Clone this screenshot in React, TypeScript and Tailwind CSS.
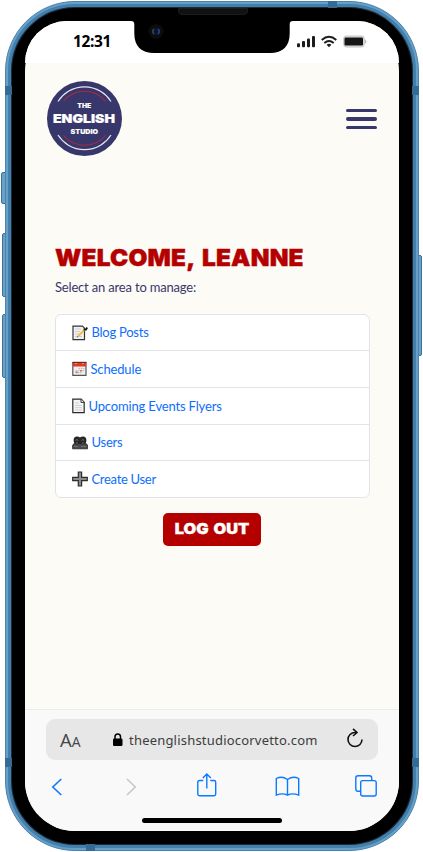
import React from "react";

const links = [
  { label: "Blog Posts", icon: "memo", row: "h-[35px]", text: "ml-[4px] tracking-[-0.25px]" },
  { label: "Schedule", icon: "calendar", row: "h-[37px]", text: "ml-[3px] tracking-[-0.15px]" },
  { label: "Upcoming Events Flyers", icon: "page", row: "h-[37px]", text: "ml-[4px] tracking-[-0.16px]" },
  { label: "Users", icon: "users", row: "h-[36px]", text: "ml-[4px] tracking-[-0.25px]" },
  { label: "Create User", icon: "plus", row: "h-[37px]", text: "ml-[4px] tracking-[-0.3px]" },
];

function Logo() {
  return (
    <svg width="76" height="76" viewBox="-0.5 0.5 76 76" className="block">
      <circle cx="38" cy="38" r="37.5" fill="#38376b" />
      <g fill="none" strokeLinecap="butt">
        <path d="M11.5 21A31.3 31.3 0 0 1 64.5 21M11.5 54.5A31.3 31.3 0 0 0 64.5 54.5" stroke="#e6e6ef" strokeWidth="1.2" />
        <path d="M17 20.5A27.5 27.5 0 0 1 59 20.5M17 55A27.5 27.5 0 0 0 59 55" stroke="#b0283f" strokeWidth="1.1" />
      </g>
      <g fill="#fff" stroke="#fff" textAnchor="middle" fontFamily="Inter, sans-serif" fontWeight="900">
        <text x="37.800" y="27.200" fontSize="6.600" strokeWidth=".1" textLength="14" lengthAdjust="spacingAndGlyphs">THE</text>
        <text x="37.500" y="42.300" fontSize="12.200" strokeWidth=".2" textLength="62" lengthAdjust="spacingAndGlyphs">ENGLISH</text>
        <text x="37.800" y="53" fontSize="6.600" strokeWidth=".1" textLength="27.500" lengthAdjust="spacingAndGlyphs">STUDIO</text>
      </g>
    </svg>
  );
}

function RowIcon({ name }: { name: string }) {
  if (name === "memo")
    return (
      <svg width="16" height="16" viewBox="0 0 16 16" className="shrink-0">
        <path d="M1 1.200h9.500l2 2v11.500H1z" fill="#f1f1f1" stroke="#333" strokeWidth="1.200" />
        <path d="M3 4h6M3 6.500h5M3 9h4M3 11.500h7" stroke="#cfcfcf" />
        <path d="M6 11.300L12.600 4.600" stroke="#f0bd4c" strokeWidth="2" />
        <path d="M11.600 4.500h2.400l1.200-2" fill="none" stroke="#1a1a1a" strokeWidth="1.900" />
        <path d="M4.800 12.600l1.600-.5-1-1z" fill="#444" />
      </svg>
    );
  if (name === "calendar")
    return (
      <svg width="16" height="16" viewBox="0 0 16 16" className="shrink-0">
        <path d="M.8 1.600h13.200v12.800H.8z" fill="#efefef" stroke="#555" strokeWidth="1.200" />
        <path d="M1 1.500h13v4H1z" fill="#e2391f" />
        <path d="M.5 1.300h14" stroke="#4a2a2a" />
        <path d="M3 2.600h2M10 2.600h2" stroke="#f88" />
        <path d="M6.500 7.700h6M3.500 9.700h9M3.500 11.700h6" stroke="#b5b5b5" strokeDasharray="1.500 .8" />
        <path d="M3.500 11.200h2.400M8 9.700h2" stroke="#e8735e" strokeWidth="1.600" />
      </svg>
    );
  if (name === "page")
    return (
      <svg width="13" height="16" viewBox="0 0 13 16" className="shrink-0">
        <path d="M.8 1.200h8.400l3 3v10.500H.8z" fill="#f5f5f5" stroke="#2a2a2a" strokeWidth="1.200" />
        <path d="M9 1.200v3.200h3.200" fill="#fff" stroke="#333" />
        <path d="M3 5h4M3 7.500h7M3 9.700h7M3 12h7" stroke="#cfcfcf" />
      </svg>
    );
  if (name === "users")
    return (
      <svg width="16" height="16" viewBox="0 0 16 16" className="shrink-0">
        <path d="M.6 13.800V11q0-2 2-2.400l2-.6h7l2 .6q2 .5 2 2.400v2.800z" fill="#4b4b4b" stroke="#222" strokeWidth=".8" />
        <path d="M1.600 5Q1.700 1.400 5 1.400q2 0 3 1 1-1 3-1 3.300 0 3.400 3.600 0 4.500-3.400 4.500-2 0-3-1-1 1-3 1Q1.600 9.500 1.600 5z" fill="#262626" />
        <path d="M3.600 5.500q1.400-2 2.800 0M9.400 5.500q1.400-2 2.800 0M4 8h2M10 8h2" fill="none" stroke="#777" strokeWidth=".9" />
        <path d="M2 11.500h4M9 11.500h5" stroke="#777" strokeWidth=".8" />
      </svg>
    );
  return (
    <svg width="16" height="16" viewBox="0 0 16 16" className="shrink-0">
      <path d="M6.300 1h3.300v5.300h5.700v3.300H9.600V15H6.300V9.600H.7V6.300h5.600z" fill="#8b8b8b" stroke="#2d2d2d" strokeWidth="1.200" />
    </svg>
  );
}

function SignalIcons() {
  return (
    <svg width="72" height="14" viewBox="0 0 72 14" className="block">
      <g fill="#1d1d1f">
        <rect x="0" y="8.200" width="3" height="4" rx="1" />
        <rect x="5" y="6" width="3" height="6.200" rx="1" />
        <rect x="10" y="3.500" width="3" height="8.700" rx="1" />
        <rect x="15" y="1" width="3" height="11.200" rx="1" />
      </g>
      <g fill="none" stroke="#1d1d1f" strokeWidth="2">
        <path d="M24.700 4.900Q32 -1.300 39.300 4.900" />
        <path d="M27.300 7.900Q32 4 36.700 7.900" />
      </g>
      <path d="M29.600 9.700Q32 7.900 34.400 9.700L32 12.200z" fill="#1d1d1f" />
      <rect x="46.700" y="1" width="20.500" height="11" rx="2.500" fill="#ddd" stroke="#c6c6c6" />
      <rect x="47.500" y="2.500" width="18.500" height="8" rx="1.200" fill="#161616" />
      <path d="M68.200 4.800q2 1.800 0 3.600z" fill="#bbb" stroke="#bbb" strokeWidth=".6" />
    </svg>
  );
}

function StatusBar() {
  return (
    <header className="relative flex h-[42px] shrink-0 items-start justify-between bg-white pl-[48px] pr-[30px]">
      <span className="mt-[10px] font-['Open_Sans',sans-serif] text-[15.5px] font-bold leading-[21px] tracking-[-0.4px] text-black">12:31</span>
      <div className="mt-[14px]"><SignalIcons /></div>
      <svg width="162" height="33" viewBox="0 0 162 33" className="absolute left-[106px] top-[-1px]">
        <path d="M0 0H162V1Q158.700 1 158.700 4V13Q158.700 33 138.700 33H23.300Q3.300 33 3.300 13V4Q3.300 1 0 1z" fill="#000" />
        <circle cx="25" cy="11.500" r="7.500" fill="#0c0c0e" />
        <circle cx="25" cy="11.500" r="4" fill="#10131a" />
        <path d="M23 9q-2.500 2.500 0 5" fill="none" stroke="#1d4463" strokeWidth="1.800" />
        <path d="M27 9q2.500 2.500 0 5" fill="none" stroke="#26358a" strokeWidth="1.800" />
      </svg>
    </header>
  );
}

function BrowserBar() {
  return (
    <footer className="flex h-[122px] shrink-0 flex-col border-t border-[#ececec] bg-[#f9f9f9] px-[21px] pt-[9px]">
      <div className="flex h-[41px] items-center rounded-[9px] bg-[#e7e7e7] px-[14px] font-['Noto_Sans',sans-serif] text-[#3c3c3c]">
        <span className="w-[53px] pt-px font-['Open_Sans',sans-serif] text-[18.5px] leading-none text-[#444]">A<span className="text-[14px]">A</span></span>
        <svg width="10" height="14" viewBox="0 0 10 14" className="shrink-0">
          <rect x="0" y="5.500" width="9.500" height="7.500" rx="1.300" fill="#000" />
          <path d="M2 6V3.700a2.750 2.750 0 0 1 5.500 0V6" fill="none" stroke="#000" strokeWidth="1.500" />
        </svg>
        <span className="ml-[6px] w-[190px] whitespace-nowrap pt-[2px] text-[13px] tracking-[0.2px]">theenglishstudiocorvetto.com</span>
        <svg width="18" height="20" viewBox="0 0 18 20" className="-mt-[3px] ml-auto shrink-0" fill="none" stroke="#111" strokeWidth="1.600">
          <path d="M10.500 4.500H9A7 7 0 1 0 16 11.500" />
          <path d="M7 .8l4 3.700-4 3.500" />
        </svg>
      </div>
      <div className="mt-[12px] flex h-[30px] items-center justify-between pl-[5px] pr-px">
        <svg width="12" height="18" viewBox="0 0 12 18" fill="none" stroke="#0a7aff" strokeWidth="1.600"><path d="M10.300 1L1.800 9l8.500 8" /></svg>
        <svg width="12" height="18" viewBox="0 0 12 18" className="ml-[4px] mr-px" fill="none" stroke="#c7c7c9" strokeWidth="1.600"><path d="M1 1L9.300 9 1 17" /></svg>
        <svg width="20" height="26" viewBox="1.200 0 20 26" className="-mt-[5px] overflow-visible" fill="none" stroke="#0a7aff" strokeWidth="1.400">
          <path d="M6.500 8.500H2.700Q1 8.500 1 10.200V22q0 1.700 1.700 1.700h14.500q1.700 0 1.700-1.700V10.200q0-1.700-1.700-1.700H13.500M10 16.500V2M6 6l4-4 4 4" />
        </svg>
        <svg width="24" height="20" viewBox="1.500 0.5 24 20" className="mr-[-5px] overflow-visible" fill="none" stroke="#0a7aff" strokeWidth="1.400">
          <path d="M12 3Q6.500-1 .8 2v16.700Q7 16 12 18.700 17 16 23.200 18.700V2Q17.500-1 12 3V18.700" />
        </svg>
        <svg width="22" height="22" viewBox="0 0 22 22" className="-mt-[3px]" fill="none" stroke="#0a7aff" strokeWidth="1.400">
          <path d="M5.500 16.200H3Q.8 16.200.8 14V3Q.8.800 3 .8h11.500q2.200 0 2.200 2.200v2.500" />
          <rect x="5.700" y="5.600" width="15.500" height="15.400" rx="2" />
        </svg>
      </div>
      <div className="mx-auto mt-[16px] h-[5px] w-[140px] rounded-full bg-black" />
    </footer>
  );
}

export default function App() {
  return (
    <div className="relative h-[852px] w-[423px] overflow-hidden bg-white">
      <span className="absolute left-[1px] top-[172px] h-[32px] w-[5px] rounded-l-[2px] border border-[#3c7099] bg-[#6aa1c9]" />
      <span className="absolute left-[2px] top-[233px] h-[64px] w-[4px] rounded-l-[2px] border border-[#3c7099] bg-[#6aa1c9]" />
      <span className="absolute left-[2px] top-[314px] h-[64px] w-[4px] rounded-l-[2px] border border-[#3c7099] bg-[#6aa1c9]" />
      <span className="absolute left-[418px] top-[255px] h-[101px] w-[4px] rounded-r-[2px] border border-[#3c7099] bg-[#6aa1c9]" />
      <div className="ml-[5px] h-[851px] w-[414px] pt-px">
        <div className="relative h-[850px] rounded-[70px] border border-[#4d82aa] bg-[#65a0c8] p-[2px]">
          <span className="absolute left-[-1px] top-[84px] h-[9px] w-[7px] bg-[#356a94]" />
          <span className="absolute left-[-1px] top-[756px] h-[9px] w-[7px] bg-[#356a94]" />
          <span className="absolute right-[-1px] top-[84px] h-[9px] w-[7px] bg-[#356a94]" />
          <span className="absolute right-[-1px] top-[756px] h-[9px] w-[7px] bg-[#356a94]" />
          <span className="absolute left-[322px] top-[-1px] h-[7px] w-[9px] bg-[#356a94]" />
          <span className="absolute bottom-[-1px] left-[80px] h-[7px] w-[9px] bg-[#356a94]" />
          <div className="h-full rounded-[67px] border-[3px] border-[#437fac] bg-[#1c2b38] p-px">
            <div className="relative h-full rounded-[63px] bg-black p-[13px]">
              <span className="absolute left-[166px] top-0 h-[7px] w-[70px] rounded-b-[4px] border border-[#1c1c1c] bg-[#111]" />
              <div className="flex h-full flex-col rounded-[50px] bg-[#fcfbf5]">
                <div className="rounded-t-[50px] bg-white [&>header]:rounded-t-[50px]"><StatusBar /></div>
                <main className="flex flex-1 flex-col text-[#38376b]">
                  <nav className="flex items-center justify-between pl-[21px] pr-[22px] pt-[18px]">
                    <Logo />
                    <button className="flex w-[31px] flex-col gap-[5px]" aria-label="Menu">
                      <span className="h-[3.5px] rounded-full bg-[#38376b]" />
                      <span className="h-[3.5px] rounded-full bg-[#38376b]" />
                      <span className="h-[3.5px] rounded-full bg-[#38376b]" />
                    </button>
                  </nav>
                  <section className="flex flex-col px-[30px] pt-[87px]">
                    <h1 className="origin-left scale-x-[1.06] whitespace-nowrap font-['Inter',sans-serif] text-[23px] font-black leading-[28px] tracking-[0.2px] text-[#b50000] [-webkit-text-stroke:0.4px_#b50000] [word-spacing:2.5px]">WELCOME, LEANNE</h1>
                    <p className="mt-[5px] font-['Lato',sans-serif] text-[13px] leading-[20px] tracking-[-0.18px]">Select an area to manage:</p>
                    <ul className="mt-[17px] w-[315px] overflow-hidden rounded-[6px] border border-[#e2e5e8] bg-white">
                      {links.map((l, i) => (
                        <li key={l.label} className={`flex items-center pl-[15.5px] ${l.row} ${i ? "border-t border-[#e2e5e8]" : ""}`}>
                          <RowIcon name={l.icon} />
                          <a className={`-mt-px font-['Lato',sans-serif] text-[13px] leading-[20px] text-[#0d6efd] ${l.text}`}>{l.label}</a>
                        </li>
                      ))}
                    </ul>
                    <button className="mx-auto mt-[15px] flex h-[33px] w-[98px] items-center justify-center rounded-[5px] bg-[#b50000]">
                      <span className="-mt-px scale-x-[1.13] whitespace-nowrap font-['Inter',sans-serif] text-[14.5px] font-black text-white [-webkit-text-stroke:0.3px_#fff] [word-spacing:1.5px]">LOG OUT</span>
                    </button>
                  </section>
                </main>
                <div className="overflow-hidden rounded-b-[50px]"><BrowserBar /></div>
              </div>
            </div>
          </div>
        </div>
      </div>
    </div>
  );
}
